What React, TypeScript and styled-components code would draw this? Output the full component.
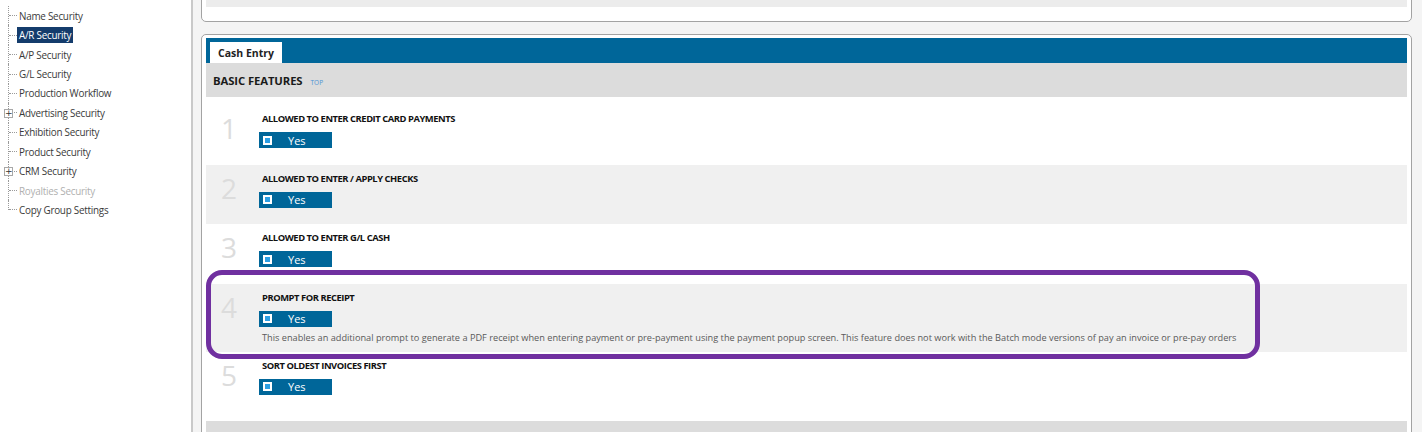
import React from 'react';
import styled, { createGlobalStyle } from 'styled-components';

type TreeNode = {
  label: string;
  expandable?: boolean;
  selected?: boolean;
  disabled?: boolean;
};

type Feature = {
  title: string;
  note?: string;
  highlighted?: boolean;
};

const treeNodes: TreeNode[] = [
  { label: 'Name Security' },
  { label: 'A/R Security', selected: true },
  { label: 'A/P Security' },
  { label: 'G/L Security' },
  { label: 'Production Workflow' },
  { label: 'Advertising Security', expandable: true },
  { label: 'Exhibition Security' },
  { label: 'Product Security' },
  { label: 'CRM Security', expandable: true },
  { label: 'Royalties Security', disabled: true },
  { label: 'Copy Group Settings' },
];

const features: Feature[] = [
  { title: 'ALLOWED TO ENTER CREDIT CARD PAYMENTS' },
  { title: 'ALLOWED TO ENTER / APPLY CHECKS' },
  { title: 'ALLOWED TO ENTER G/L CASH' },
  {
    title: 'PROMPT FOR RECEIPT',
    note: 'This enables an additional prompt to generate a PDF receipt when entering payment or pre-payment using the payment popup screen. This feature does not work with the Batch mode versions of pay an invoice or pre-pay orders',
    highlighted: true,
  },
  { title: 'SORT OLDEST INVOICES FIRST' },
];

const App = () => {
  return (
    <>
      <GlobalStyle />
      <Page>
        <Sidebar>
          <Tree>
            {treeNodes.map((node, i) => (
              <TreeItem key={node.label}>
                <Branch $last={i === treeNodes.length - 1}>
                  <Connector />
                  {node.expandable && <Expander>+</Expander>}
                </Branch>
                <TreeLabel $selected={node.selected} $disabled={node.disabled}>
                  {node.label}
                </TreeLabel>
              </TreeItem>
            ))}
          </Tree>
        </Sidebar>

        <Main>
          <TopPanel>
            <TopPanelBar />
          </TopPanel>

          <Panel>
            <TabBar>
              <Tab>Cash Entry</Tab>
            </TabBar>
            <SectionHeader>
              <SectionTitle>BASIC FEATURES</SectionTitle>
              <TopLink>TOP</TopLink>
            </SectionHeader>
            <FeatureList>
              {features.map((f, i) => (
                <FeatureRow key={f.title} $alt={i % 2 === 1} $hasNote={!!f.note}>
                  {f.highlighted && <Highlight />}
                  <FeatureNumber>{i + 1}</FeatureNumber>
                  <FeatureBody>
                    <FeatureTitle>{f.title}</FeatureTitle>
                    <YesToggle>
                      <CheckBox />
                      <span>Yes</span>
                    </YesToggle>
                    {f.note && <FeatureNote>{f.note}</FeatureNote>}
                  </FeatureBody>
                </FeatureRow>
              ))}
            </FeatureList>
            <SectionEnd />
          </Panel>
        </Main>
      </Page>
    </>
  );
};

export default App;

const GlobalStyle = createGlobalStyle`
  html, body {
    margin: 0;
    padding: 0;
    background: #fff;
  }
  body {
    font-family: "Open Sans", "Noto Sans", sans-serif;
    color: #333;
  }
  * {
    box-sizing: border-box;
  }
`;

const Page = styled.div`
  display: flex;
  height: 432px;
  overflow: hidden;
`;

const Sidebar = styled.nav`
  width: 193px;
  flex: none;
  background: #fff;
  border-right: 2px solid #c9c9c9;
  padding-top: 6px;
`;

const Tree = styled.ul`
  list-style: none;
  margin: 0;
  padding: 0;
`;

const TreeItem = styled.li`
  display: flex;
  align-items: center;
  height: 19.45px;
`;

const Branch = styled.span<{ $last?: boolean }>`
  position: relative;
  align-self: ${({ $last }) => ($last ? 'flex-start' : 'stretch')};
  height: ${({ $last }) => ($last ? '50%' : 'auto')};
  width: 9px;
  margin-left: 8px;
  border-left: 1px dotted #9a9a9a;
  display: flex;
  align-items: ${({ $last }) => ($last ? 'flex-end' : 'center')};
`;

const Connector = styled.span`
  flex: 1;
  border-top: 1px dotted #9a9a9a;
`;

const Expander = styled.span`
  position: absolute;
  left: -5px;
  top: 50%;
  margin-top: -4px;
  width: 9px;
  height: 9px;
  background: #fff;
  border: 1px solid #a8a8a8;
  font-size: 9px;
  line-height: 6px;
  text-align: center;
  color: #333;
  font-family: "DejaVu Sans", sans-serif;
`;

const TreeLabel = styled.span<{ $selected?: boolean; $disabled?: boolean }>`
  font-size: 9.9px;
  letter-spacing: -0.25px;
  line-height: 16px;
  padding: 0 2px;
  white-space: nowrap;
  background: ${({ $selected }) => ($selected ? '#143c6c' : 'transparent')};
  color: ${({ $selected, $disabled }) => ($selected ? '#fff' : $disabled ? '#b0b0b0' : '#3a3a3a')};
`;

const Main = styled.main`
  flex: 1;
  background: #f4f4f4;
  padding: 0 10px 0 8px;
  display: flex;
  flex-direction: column;
  gap: 12px;
`;

const TopPanel = styled.section`
  margin-top: -10px;
  background: #fff;
  border: 1px solid #a3a3a3;
  border-radius: 5px;
  padding: 0 4px 14px;
`;

const TopPanelBar = styled.div`
  height: 16px;
  background: #ececec;
`;

const Panel = styled.section`
  background: #fff;
  border: 1px solid #a3a3a3;
  border-radius: 5px;
  padding: 3px 4px 0;
  flex: 1;
`;

const TabBar = styled.div`
  height: 25px;
  background: #006699;
  display: flex;
  align-items: flex-end;
  padding-left: 4px;
`;

const Tab = styled.div`
  height: 21px;
  width: 72px;
  background: #fff;
  font-size: 10.5px;
  font-weight: 700;
  color: #222;
  display: flex;
  align-items: center;
  justify-content: center;
`;

const SectionHeader = styled.div`
  height: 34px;
  background: #dcdcdc;
  display: flex;
  align-items: baseline;
  padding: 10px 0 0 7px;
`;

const SectionTitle = styled.span`
  font-size: 11.3px;
  font-weight: 700;
  letter-spacing: -0.1px;
  color: #1a1a1a;
`;

const TopLink = styled.span`
  font-size: 6.5px;
  color: #4d94d4;
  margin-left: 8px;
`;

const FeatureList = styled.div`
  padding: 8px 0 10px;
`;

const FeatureRow = styled.div<{ $alt?: boolean; $hasNote?: boolean }>`
  position: relative;
  display: flex;
  background: ${({ $alt }) => ($alt ? '#f0f0f0' : '#fff')};
  padding: 7px 0 ${({ $hasNote }) => ($hasNote ? 7 : 16.6)}px;
`;

const Highlight = styled.div`
  position: absolute;
  left: 0;
  top: -14px;
  width: 1054px;
  height: 89px;
  border: 5px solid #7030a0;
  border-radius: 16px;
  pointer-events: none;
  z-index: 1;
`;

const FeatureNumber = styled.div`
  width: 53px;
  flex: none;
  padding-left: 15px;
  margin-top: 2px;
  font-size: 28px;
  line-height: 28px;
  color: #dcdcdc;
`;

const FeatureBody = styled.div`
  display: flex;
  flex-direction: column;
  align-items: flex-start;
`;

const FeatureTitle = styled.div`
  font-size: 9.4px;
  letter-spacing: -0.45px;
  font-weight: 700;
  line-height: 14px;
  color: #111;
  padding-left: 3px;
`;

const YesToggle = styled.div`
  margin-top: 6px;
  width: 73px;
  height: 16px;
  background: #006699;
  display: flex;
  align-items: center;
  padding-left: 4px;
  gap: 16px;
  font-size: 11px;
  color: #fff;
`;

const CheckBox = styled.span`
  width: 9px;
  height: 9px;
  background: #2d9fe3;
  border: 2px solid #fff;
  flex: none;
`;

const FeatureNote = styled.div`
  margin-top: 4px;
  padding-left: 3px;
  font-size: 9.2px;
  line-height: 14px;
  color: #5a5a5a;
  white-space: nowrap;
`;

const SectionEnd = styled.div`
  height: 34px;
  background: #dcdcdc;
`;
